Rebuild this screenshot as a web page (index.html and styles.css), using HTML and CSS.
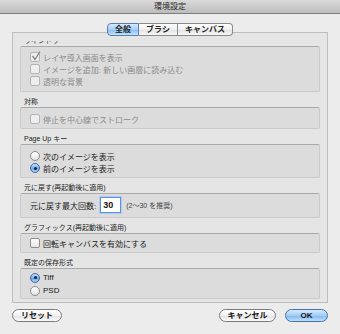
FILE: index.html
```html
<!DOCTYPE html>
<html lang="ja">
<head>
    <meta charset="UTF-8">
    <title>環境設定</title>
    <link rel="stylesheet" href="styles.css">
</head>
<body>
    <div class="titlebar">環境設定</div>
    <div class="main">
        <div class="tabs">
            <span class="tab on">全般</span><span class="tab">ブラシ</span><span class="tab">キャンバス</span>
        </div>
        <div class="panel">
            <div class="cut"><span>ウインドウ</span></div>
            <div class="group g1 off">
                <div class="row"><span class="check"><svg width="10" height="10" viewBox="0 0 10 10"><path d="M1.5 5 L4 8.5 L9 0.5" fill="none" stroke="#8a8a8a" stroke-width="1.4"/></svg></span>レイヤ導入画面を表示</div>
                <div class="row"><span class="check"></span>イメージを追加: 新しい画層に読み込む</div>
                <div class="row"><span class="check"></span>透明な背景</div>
            </div>

            <div class="label">対称</div>
            <div class="group g2 off">
                <div class="row"><span class="check"></span>停止を中心線でストローク</div>
            </div>

            <div class="label">Page Up キー</div>
            <div class="group g3">
                <div class="row"><span class="radio"></span>次のイメージを表示</div>
                <div class="row"><span class="radio sel"></span>前のイメージを表示</div>
            </div>

            <div class="label">元に戻す(再起動後に適用)</div>
            <div class="group g4">
                <div class="row">元に戻す最大回数:<input class="num" type="text" value="30" readonly><span class="hint">(2〜30 を推奨)</span></div>
            </div>

            <div class="label">グラフィックス(再起動後に適用)</div>
            <div class="group g5">
                <div class="row"><span class="check"></span>回転キャンバスを有効にする</div>
            </div>

            <div class="label">既定の保存形式</div>
            <div class="group g6">
                <div class="row"><span class="radio sel"></span>Tiff</div>
                <div class="row"><span class="radio"></span>PSD</div>
            </div>
        </div>
        <div class="buttons">
            <button class="btn reset">リセット</button>
            <button class="btn cancel">キャンセル</button>
            <button class="btn ok">OK</button>
        </div>
    </div>
</body>
</html>
```

FILE: styles.css
```css
html {
    background: #ececec;
}
body {
    margin: 0;
    width: 340px;
    height: 334px;
    overflow: hidden;
    font-family: "Liberation Sans", "Noto Sans CJK JP", sans-serif;
    font-size: 8px;
    color: #1a1a1a;
    background: #ececec;
}
.titlebar {
    height: 13px;
    line-height: 13px;
    text-align: center;
    background: linear-gradient(#dadada, #bcbcbc);
    border-bottom: 1px solid #7e7e7e;
    color: #2a2a2a;
}
.main {
    padding: 9px 12px 0;
}
.tabs {
    display: flex;
    justify-content: center;
    position: relative;
    z-index: 1;
    margin-bottom: -4px;
}
.tab {
    height: 11px;
    line-height: 11px;
    padding: 0 7px;
    border: 1px solid #8a8a8a;
    border-left: none;
    background: linear-gradient(#ffffff, #efefef 50%, #e2e2e2 51%, #f7f7f7);
    font-weight: bold;
    color: #222;
}
.tab:first-child {
    border-left: 1px solid #8a8a8a;
    border-radius: 4px 0 0 4px;
}
.tab:last-child {
    border-radius: 0 4px 4px 0;
}
.tab.on {
    background: linear-gradient(#d6eafc, #a8cff5 50%, #84bbef 51%, #c2e2fd);
    border-color: #5d7fb0;
}
.panel {
    background: #e5e5e5;
    border: 1px solid #bdbdbd;
    padding: 0 7px 3px;
}
.cut {
    margin-top: 8px;
    margin-bottom: 1px;
    height: 4px;
    overflow: hidden;
    padding-left: 4px;
    font-size: 7px;
    color: #333;
}
.cut span {
    display: block;
    line-height: 8px;
    margin-top: -4px;
}
.label {
    margin-top: 5px;
    height: 10px;
    line-height: 10px;
    padding-left: 4px;
    font-size: 7px;
    color: #222;
}
.group {
    background: #dcdcdc;
    border: 1px solid #cacaca;
    border-top-color: #a9a9a9;
    border-radius: 2px;
    padding: 4px 9px;
}
.g2, .g3 { padding: 5px 9px 3px; }
.g4, .g5 { padding: 3px 9px; }
.g4 { padding-bottom: 4px; }
.g6 { padding: 2px 9px 1px; }
.row {
    display: flex;
    align-items: center;
    gap: 3px;
    height: 12px;
    white-space: nowrap;
}
.g4 .row { height: 16px; gap: 0; }
.g6 .row { height: 13px; }
.off { color: #8a8a8a; }
.check {
    position: relative;
    flex: none;
    width: 8px;
    height: 8px;
    border: 1px solid #8e8e8e;
    border-radius: 2px;
    background: linear-gradient(#ffffff, #e6e6e6);
}
.off .check {
    border-color: #b4b4b4;
    background: #eeeeee;
}
.check svg {
    position: absolute;
    left: 0;
    top: -2px;
}
.radio {
    flex: none;
    width: 8px;
    height: 8px;
    border: 1px solid #8a8a8a;
    border-radius: 50%;
    background: linear-gradient(#ffffff, #e4e4e4);
    display: flex;
    align-items: center;
    justify-content: center;
}
.radio.sel {
    border-color: #42669e;
    background: linear-gradient(#cfe5fb, #6aa7e8 55%, #a9d2fb);
}
.radio.sel::after {
    content: "";
    width: 3px;
    height: 3px;
    border-radius: 50%;
    background: #14233f;
}
.num {
    box-sizing: border-box;
    width: 21px;
    height: 16px;
    margin: 0 0 0 4px;
    padding: 0 0 0 2px;
    border: 1px solid #5f93dc;
    box-shadow: 0 0 0 1px #aecbef;
    background: #fff;
    font-family: "Liberation Sans", sans-serif;
    font-size: 9px;
    font-weight: bold;
    color: #111;
    outline: none;
}
.hint {
    margin-left: 5px;
    font-size: 7px;
    color: #444;
}
.buttons {
    display: flex;
    margin-top: 6px;
}
.btn {
    height: 13px;
    padding: 0;
    border: 1px solid #7a7a7a;
    border-radius: 7px;
    background: linear-gradient(#ffffff, #f1f1f1 50%, #e1e1e1 51%, #fbfbfb);
    font-family: "Liberation Sans", "Noto Sans CJK JP", sans-serif;
    font-size: 8px;
    font-weight: bold;
    line-height: 11px;
    color: #151515;
}
.reset { width: 50px; }
.cancel {
    width: 57px;
    margin-left: auto;
    margin-right: 9px;
}
.ok {
    width: 43px;
    border-color: #4a70aa;
    background: linear-gradient(#d4e9fc, #a2cdf6 50%, #7db7ef 51%, #bfe1fd);
}
```
